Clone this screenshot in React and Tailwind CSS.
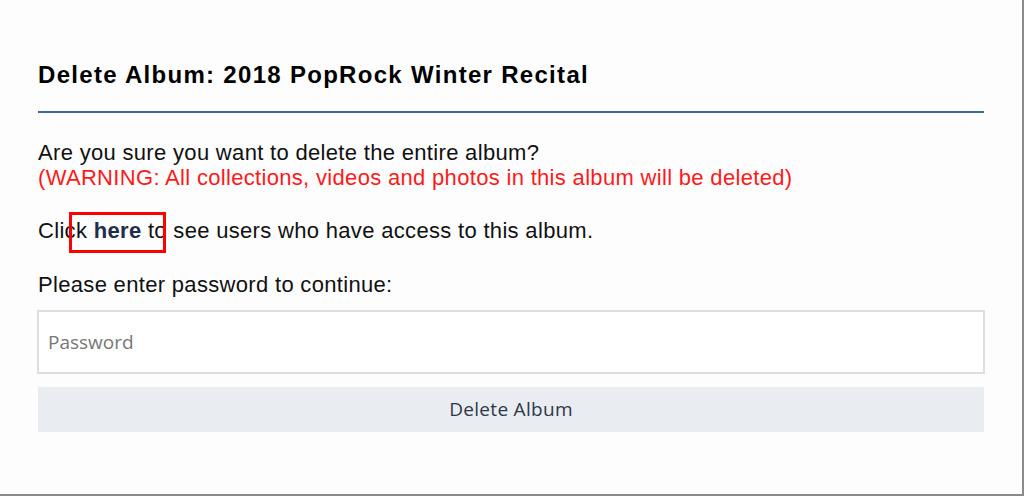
import React from "react";

export default function App() {
  return (
    <div className="w-[1024px] h-[496px] box-border bg-[#fdfdfd] border-r-2 border-b-2 border-[#8a8a8a] pl-[38px] pr-[38px] pt-[60px] font-['Liberation_Sans',Arial,sans-serif] text-black">
      <h1 className="text-[24px] leading-[29px] font-bold tracking-[1.3px] whitespace-nowrap">Delete Album: 2018 PopRock Winter Recital</h1>
      <div className="mt-[22px] h-[2px] bg-[#4068a0]" />
      <p className="mt-[27px] text-[22px] leading-[25px] tracking-[0.32px] text-[#111]">
        Are you sure you want to delete the entire album?
        <br />
        <span className="text-[#ff1a1a]">(WARNING: All collections, videos and photos in this album will be deleted)</span>
      </p>
      <div className="relative mt-[28px] text-[22px] leading-[25px] tracking-[0.32px] text-[#111]">
        Click <a className="font-bold text-[#1f2d4d]">here</a> to see users who have access to this album.
        <div className="absolute left-[31px] top-[-6px] w-[97px] h-[41px] border-[3px] border-[#ff0000]" />
      </div>
      <p className="mt-[29px] text-[22px] leading-[25px] tracking-[0.32px] text-[#111]">Please enter password to continue:</p>
      <div className="mt-[13px] mx-[-1px] h-[64px] border-2 border-[#dedede] bg-white flex items-center pl-[9px] font-['Open_Sans',sans-serif] text-[19px] text-[#777]">
        Password
      </div>
      <div className="mt-[13px] h-[45px] bg-[#e9ecf0] flex items-center justify-center font-['Open_Sans',sans-serif] text-[19px] tracking-[0.3px] text-[#2f3849]">
        Delete Album
      </div>
    </div>
  );
}
